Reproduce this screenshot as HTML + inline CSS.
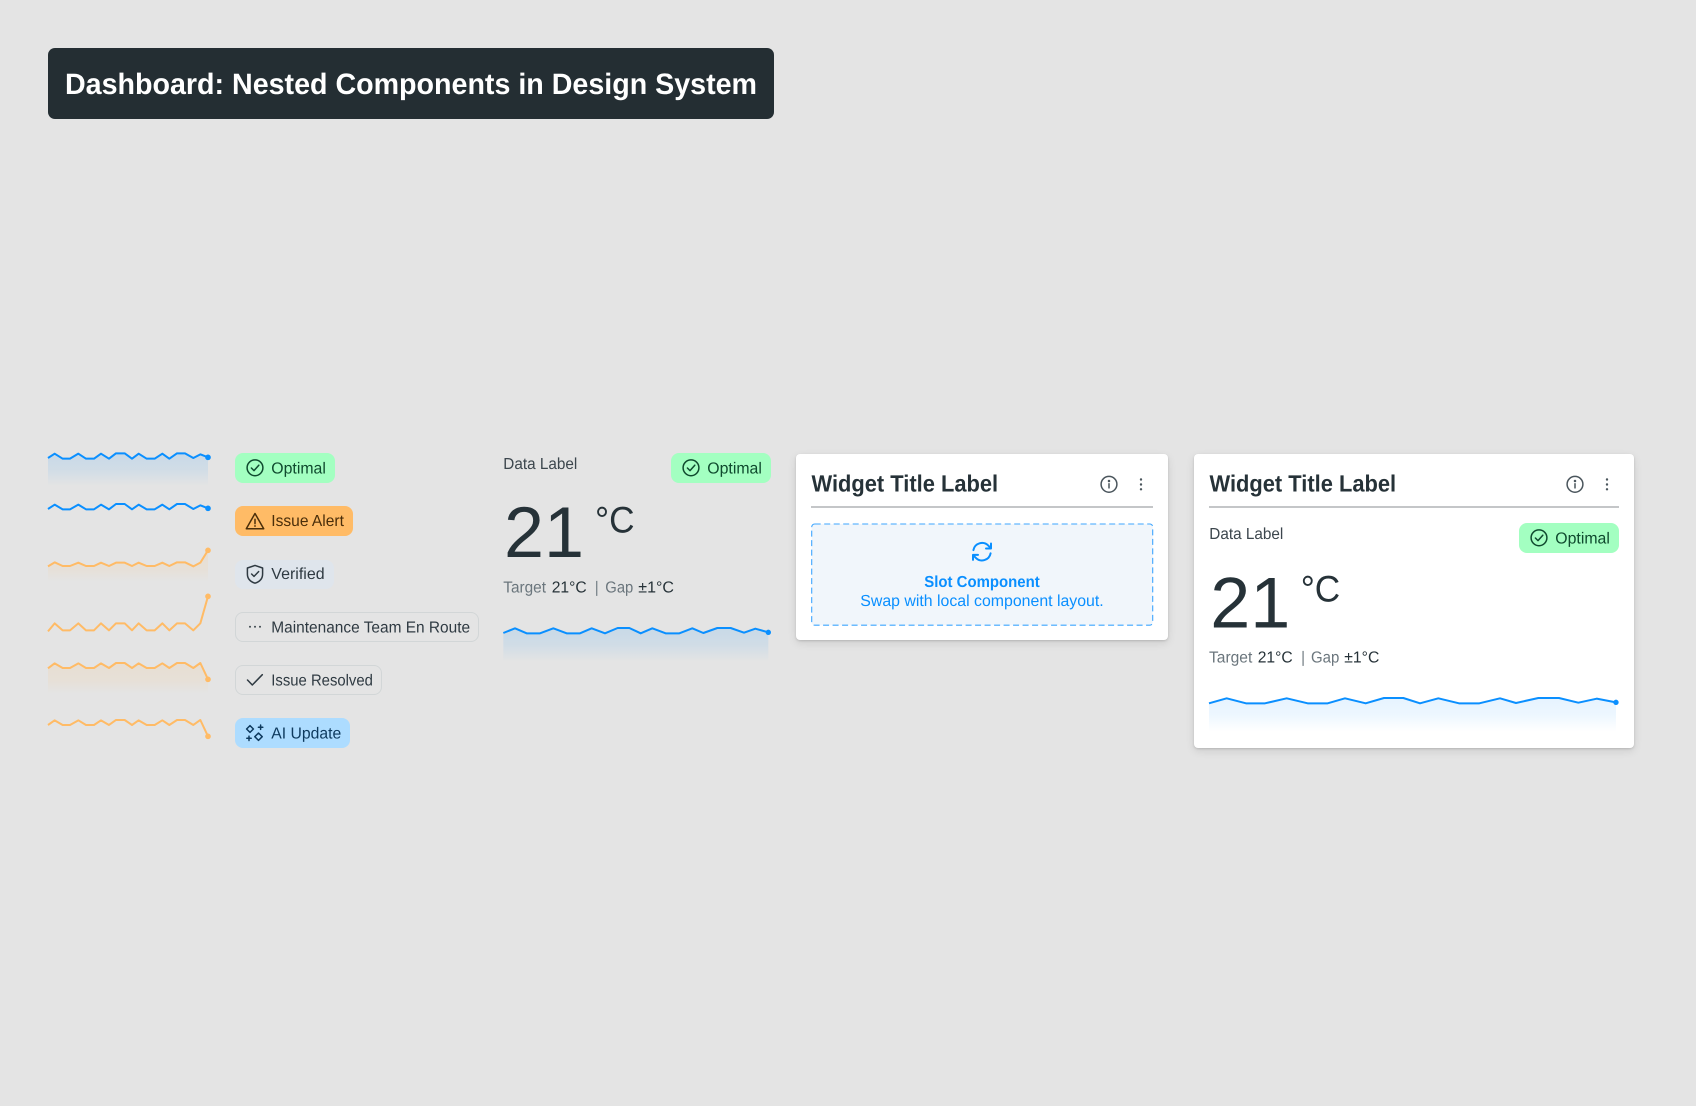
<!DOCTYPE html>
<html lang="en">
<head>
<meta charset="utf-8">
<title>Dashboard: Nested Components in Design System</title>
<style>
html,body{margin:0;padding:0;width:1696px;height:1106px;background:#e4e4e4;overflow:hidden}
body{position:relative;font-family:"Liberation Sans",sans-serif}
.b{position:absolute;box-sizing:border-box}
.title{left:48px;top:48px;width:726px;height:71px;background:#242e33;border-radius:7px}
.card{background:#fff;border-radius:4px;box-shadow:0 1px 2px rgba(0,0,0,.14),0 3px 9px rgba(0,0,0,.1)}
.badge{height:29.4px;border-radius:8px}
.green{background:#a3ffc1}
.orange{background:#ffbb66}
.slate{background:#dfe5ec}
.outline{border:1px solid #d2d6d7}
.blue{background:#addcff}
svg{position:absolute;left:0;top:0}
text{font-family:"Liberation Sans",sans-serif;font-size:16px;text-rendering:geometricPrecision}
.ic{fill:none;stroke-width:1.5;stroke-linecap:round;stroke-linejoin:round}
.sp{fill:none;stroke-width:6;stroke-linejoin:round}
</style>
</head>
<body>
<div class="b title"></div>
<div class="b card" style="left:795.5px;top:454px;width:372.5px;height:186px"></div>
<div class="b card" style="left:1193.7px;top:454px;width:440px;height:294px"></div>

<div class="b badge green" style="left:235px;top:453.4px;width:100px"></div>
<div class="b badge orange" style="left:235px;top:506.4px;width:118px"></div>
<div class="b badge slate" style="left:235px;top:559.6px;width:99px"></div>
<div class="b badge outline" style="left:235px;top:612.4px;width:244px"></div>
<div class="b badge outline" style="left:235px;top:665.2px;width:146.7px"></div>
<div class="b badge blue" style="left:235px;top:718.4px;width:115px"></div>
<div class="b badge green" style="left:671px;top:453.4px;width:100px"></div>
<div class="b badge green" style="left:1519px;top:523.4px;width:100px"></div>

<svg width="1696" height="1106" viewBox="0 0 1696 1106" xmlns="http://www.w3.org/2000/svg">
<defs>
<linearGradient id="gb" x1="0" y1="0" x2="0" y2="1"><stop offset="0" stop-color="#0a8fff" stop-opacity=".13"/><stop offset=".5" stop-color="#0a8fff" stop-opacity=".09"/><stop offset="1" stop-color="#0a8fff" stop-opacity="0"/></linearGradient>
<linearGradient id="go" x1="0" y1="0" x2="0" y2="1"><stop offset="0" stop-color="#ffbb66" stop-opacity=".14"/><stop offset=".6" stop-color="#ffbb66" stop-opacity=".1"/><stop offset="1" stop-color="#ffbb66" stop-opacity="0"/></linearGradient>
<symbol id="cc" overflow="visible"><circle cx="0" cy="0" r="7.9"/><path d="M-3.6 .2L-1 2.8L3.8 -2.6"/></symbol>
<symbol id="info" overflow="visible"><circle cx="0" cy="0" r="7.9"/><path d="M0 -.6V3.6"/><circle cx="0" cy="-3.3" r=".5" fill="#4a555c"/></symbol>
</defs>

<text x="65" y="94" fill="#fff" font-weight="700" style="font-size:29.5px" textLength="692" lengthAdjust="spacingAndGlyphs">Dashboard: Nested Components in Design System</text>

<!-- sparklines -->
<g transform="translate(30 440) scale(.33333)">
<polygon fill="url(#gb)" points="54,54 74,41 98,56 120,56 145,41 168,56 192,56 213,41 237,56 258,40 284,40 306,56 326,41 350,56 374,56 397,41 418,56 441,40 465,40 490,54 511,43 534,52 534,138 54,138"/>
<polyline class="sp" stroke="#0a8fff" points="54,54 74,41 98,56 120,56 145,41 168,56 192,56 213,41 237,56 258,40 284,40 306,56 326,41 350,56 374,56 397,41 418,56 441,40 465,40 490,54 511,43 534,52"/>
<circle cx="534" cy="52" r="8.5" fill="#0a8fff"/>
<polyline class="sp" stroke="#0a8fff" points="54,207 74,194 98,208 120,208 145,194 168,208 192,208 213,194 237,208 258,192 284,192 306,208 326,194 350,208 374,208 397,194 418,208 441,192 465,192 490,207 511,196 534,205"/>
<circle cx="534" cy="205" r="8.5" fill="#0a8fff"/>
<polygon fill="url(#go)" points="54,379 74,367 98,378 120,378 145,368 168,378 192,378 213,368 237,378 258,368 284,368 306,378 326,368 350,378 374,378 397,368 418,378 441,367 465,367 490,379 511,368 534,331 534,425 54,425"/>
<polyline class="sp" stroke="#ffbb66" points="54,379 74,367 98,378 120,378 145,368 168,378 192,378 213,368 237,378 258,368 284,368 306,378 326,368 350,378 374,378 397,368 418,378 441,367 465,367 490,379 511,368 534,331"/>
<circle cx="534" cy="331" r="8.5" fill="#ffbb66"/>
</g>
<g transform="translate(30 590) scale(.33333)">
<polyline class="sp" stroke="#ffbb66" points="54,124 74,100 98,121 120,121 145,100 168,121 192,121 213,100 237,121 258,100 284,100 306,121 326,100 350,121 374,121 397,100 418,121 441,100 465,100 490,121 511,100 534,19"/>
<circle cx="534" cy="19" r="8.5" fill="#ffbb66"/>
<polygon fill="url(#go)" points="54,235 74,220 98,234 120,234 145,220 168,234 192,234 213,220 237,234 258,219 284,219 306,234 326,220 350,234 374,234 397,220 418,234 441,219 465,219 490,234 511,219 534,268 534,310 54,310"/>
<polyline class="sp" stroke="#ffbb66" points="54,235 74,220 98,234 120,234 145,220 168,234 192,234 213,220 237,234 258,219 284,219 306,234 326,220 350,234 374,234 397,220 418,234 441,219 465,219 490,234 511,219 534,268"/>
<circle cx="534" cy="268" r="8.5" fill="#ffbb66"/>
<polyline class="sp" stroke="#ffbb66" points="54,405 74,391 98,405 120,405 145,391 168,405 192,405 213,391 237,405 258,390 284,390 306,405 326,391 350,405 374,405 397,391 418,405 441,390 465,390 490,405 511,390 534,439"/>
<circle cx="534" cy="439" r="8.5" fill="#ffbb66"/>
</g>
<g transform="translate(490 440) scale(.33333)">
<polygon fill="url(#gb)" points="40,579 75,565 110,580 150,580 190,565 230,580 270,580 305,565 345,580 383,564 418,564 452,580 487,565 527,580 568,580 607,565 640,579 682,564 722,564 762,578 796,566 835,577 835,665 40,665"/>
<polyline class="sp" stroke="#0a8fff" points="40,579 75,565 110,580 150,580 190,565 230,580 270,580 305,565 345,580 383,564 418,564 452,580 487,565 527,580 568,580 607,565 640,579 682,564 722,564 762,578 796,566 835,577"/>
<circle cx="835" cy="577" r="8" fill="#0a8fff"/>
</g>
<g transform="translate(1185 570) scale(.33333)">
<polygon fill="url(#gb)" opacity=".8" points="72,400 125,385 183,400 240,400 305,385 368,400 428,400 480,385 542,400 597,384 655,384 705,400 760,385 822,400 883,400 945,385 993,399 1060,384 1122,384 1180,398 1235,386 1293,397 1293,485 72,485"/>
<polyline class="sp" stroke="#0a8fff" points="72,400 125,385 183,400 240,400 305,385 368,400 428,400 480,385 542,400 597,384 655,384 705,400 760,385 822,400 883,400 945,385 993,399 1060,384 1122,384 1180,398 1235,386 1293,397"/>
<circle cx="1293" cy="397" r="8" fill="#0a8fff"/>
</g>

<!-- badge icons & text -->
<use href="#cc" x="255" y="467.8" class="ic" stroke="#0f4a2e"/>
<text x="271.3" y="473.3" fill="#0f4a2e" textLength="54.6" lengthAdjust="spacingAndGlyphs">Optimal</text>

<path class="ic" stroke="#4a2e0a" d="M255 513.5L263.7 528.7H246.3ZM255 519.3V523.6"/><circle cx="255" cy="526" r=".9" fill="#4a2e0a"/>
<text x="271.3" y="526.2" fill="#4a2e0a" textLength="72.6" lengthAdjust="spacingAndGlyphs">Issue Alert</text>

<path class="ic" stroke="#2f3a42" d="M255 565.4L262.6 568V574C262.6 578.8 259.4 581.8 255 583.2C250.6 581.8 247.4 578.8 247.4 574V568ZM251.6 574L254 576.4L258.6 571.6"/>
<text x="271.3" y="579.2" fill="#2f3a42" textLength="53.3" lengthAdjust="spacingAndGlyphs">Verified</text>

<circle cx="250" cy="626.7" r="1" fill="#3c464d"/><circle cx="255" cy="626.7" r="1" fill="#3c464d"/><circle cx="260" cy="626.7" r="1" fill="#3c464d"/>
<text x="271.3" y="632.4" fill="#2f3a42" textLength="198.8" lengthAdjust="spacingAndGlyphs">Maintenance Team En Route</text>

<path class="ic" stroke="#2f3a42" d="M247.5 680L252.3 685L262.3 674.7"/>
<text x="271.3" y="685.4" fill="#2f3a42" textLength="101.6" lengthAdjust="spacingAndGlyphs">Issue Resolved</text>

<path class="ic" stroke="#0e3a5e" d="M250 725.6L253.4 729L250 732.4L246.6 729ZM258.5 733L262.2 736.7L258.5 740.4L254.8 736.7ZM260.6 725V729.4M258.4 727.2H262.8M249 736.1V740.5M246.8 738.3H251.2"/>
<text x="271.3" y="738.4" fill="#0e3a5e" textLength="70" lengthAdjust="spacingAndGlyphs">AI Update</text>

<!-- data display 1 -->
<text x="503.3" y="469.2" fill="#3c464d" textLength="74" lengthAdjust="spacingAndGlyphs">Data Label</text>
<use href="#cc" x="691" y="467.8" class="ic" stroke="#0f4a2e"/>
<text x="707.3" y="473.3" fill="#0f4a2e" textLength="54.6" lengthAdjust="spacingAndGlyphs">Optimal</text>
<text x="504" y="557" fill="#263238" style="font-size:72px" textLength="80" lengthAdjust="spacingAndGlyphs">21</text>
<text x="595" y="532.4" fill="#263238" style="font-size:37px" textLength="39.5" lengthAdjust="spacingAndGlyphs">°C</text>
<text x="503.3" y="592.6" fill="#6b767d" textLength="42.7" lengthAdjust="spacingAndGlyphs">Target</text>
<text x="551.7" y="592.6" fill="#263238" textLength="35" lengthAdjust="spacingAndGlyphs">21°C</text>
<text x="594.6" y="592.6" fill="#7b858b">|</text>
<text x="605.3" y="592.6" fill="#6b767d" textLength="28" lengthAdjust="spacingAndGlyphs">Gap</text>
<text x="638.3" y="592.6" fill="#263238" textLength="35.7" lengthAdjust="spacingAndGlyphs">±1°C</text>

<!-- card 1 -->
<text x="811.5" y="491.6" fill="#263238" font-weight="700" style="font-size:23.5px" textLength="186.6" lengthAdjust="spacingAndGlyphs">Widget Title Label</text>
<use href="#info" x="1109" y="484.3" class="ic" stroke="#4a555c"/>
<circle cx="1141" cy="479.5" r="1.2" fill="#4a555c"/><circle cx="1141" cy="484.5" r="1.2" fill="#4a555c"/><circle cx="1141" cy="489.3" r="1.2" fill="#4a555c"/>
<rect x="811" y="506" width="342" height="2" fill="#c4c6c8"/>
<rect x="811.7" y="524" width="341" height="101.2" rx="3" fill="#f1f6fb" stroke="#3da5ff" stroke-width="1.1" stroke-dasharray="6 3.5"/>
<g transform="translate(982 551.7)" fill="none" stroke="#0a8fff" stroke-width="2" stroke-linecap="round" stroke-linejoin="round">
<path d="M-8.6 -1.6A8.8 8.8 0 0 1 6.4 -6L9 -3.4M9 -8.2V-3.2H4M8.6 1.6A8.8 8.8 0 0 1 -6.4 6L-9 3.4M-9 8.2V3.2H-4"/>
</g>
<text x="924.3" y="587" fill="#0a8fff" font-weight="700" textLength="115.4" lengthAdjust="spacingAndGlyphs">Slot Component</text>
<text x="860.3" y="606.2" fill="#0a8fff" textLength="243.4" lengthAdjust="spacingAndGlyphs">Swap with local component layout.</text>

<!-- card 2 -->
<text x="1209.5" y="491.6" fill="#263238" font-weight="700" style="font-size:23.5px" textLength="186.6" lengthAdjust="spacingAndGlyphs">Widget Title Label</text>
<use href="#info" x="1575" y="484.3" class="ic" stroke="#4a555c"/>
<circle cx="1607" cy="479.5" r="1.2" fill="#4a555c"/><circle cx="1607" cy="484.5" r="1.2" fill="#4a555c"/><circle cx="1607" cy="489.3" r="1.2" fill="#4a555c"/>
<rect x="1209" y="506" width="410" height="2" fill="#c4c6c8"/>
<text x="1209.3" y="539" fill="#3c464d" textLength="74" lengthAdjust="spacingAndGlyphs">Data Label</text>
<use href="#cc" x="1539" y="537.8" class="ic" stroke="#0f4a2e"/>
<text x="1555.3" y="543.3" fill="#0f4a2e" textLength="54.6" lengthAdjust="spacingAndGlyphs">Optimal</text>
<text x="1210.3" y="627.5" fill="#263238" style="font-size:72px" textLength="80" lengthAdjust="spacingAndGlyphs">21</text>
<text x="1300.7" y="601.4" fill="#263238" style="font-size:37px" textLength="39.5" lengthAdjust="spacingAndGlyphs">°C</text>
<text x="1209" y="662.6" fill="#6b767d" textLength="43.3" lengthAdjust="spacingAndGlyphs">Target</text>
<text x="1257.7" y="662.6" fill="#263238" textLength="35" lengthAdjust="spacingAndGlyphs">21°C</text>
<text x="1301" y="662.6" fill="#7b858b">|</text>
<text x="1311" y="662.6" fill="#6b767d" textLength="28.3" lengthAdjust="spacingAndGlyphs">Gap</text>
<text x="1344.3" y="662.6" fill="#263238" textLength="35" lengthAdjust="spacingAndGlyphs">±1°C</text>
</svg>
</body>
</html>
